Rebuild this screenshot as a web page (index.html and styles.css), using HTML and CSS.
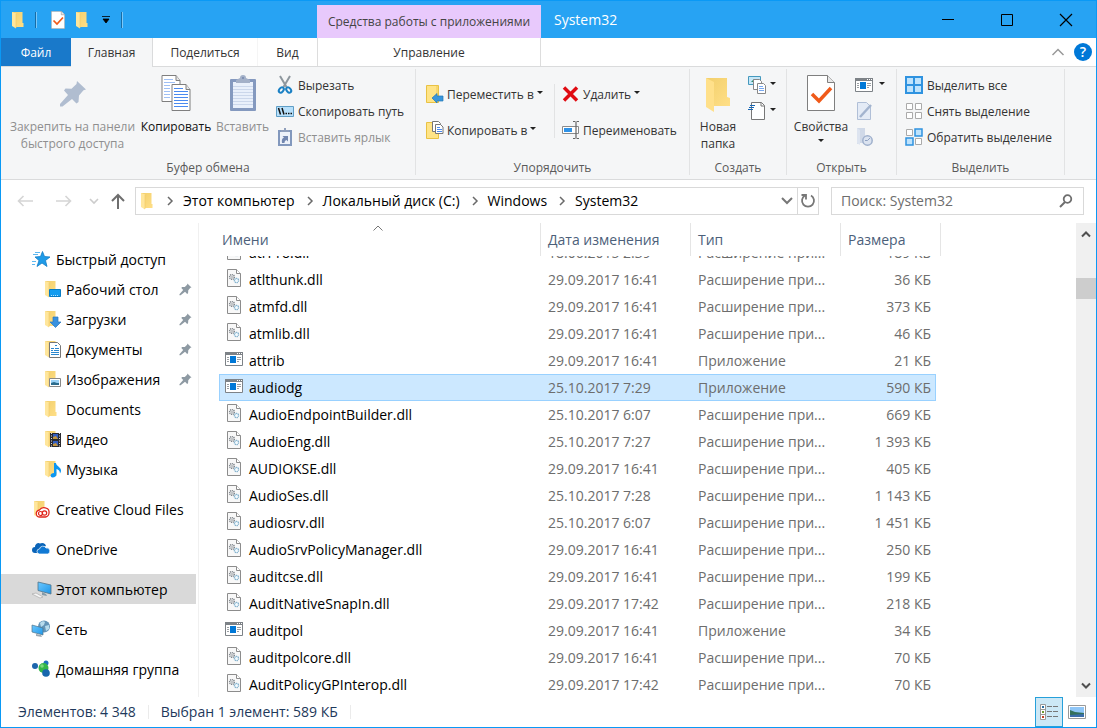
FILE: index.html
```html
<!DOCTYPE html>
<html lang="ru">
<head>
    <meta charset="UTF-8">
    <title>System32</title>
    <link rel="stylesheet" href="styles.css">
</head>
<body>
    <!-- Shared icons -->
    <svg class="sprite" aria-hidden="true">
        <defs>
            <linearGradient id="gold" x1="0" y1="0" x2="1" y2="1">
                <stop offset="0" stop-color="#f2cf6c"/><stop offset="1" stop-color="#ffdf87"/>
            </linearGradient>
            <linearGradient id="screen" x1="0" y1="0" x2="1" y2="1">
                <stop offset="0" stop-color="#6cc8ff"/><stop offset="1" stop-color="#1e96e8"/>
            </linearGradient>
        </defs>
        <symbol id="folder" viewBox="0 0 18 18">
            <path d="M1 1h10.500v11h1v4H3z" fill="url(#gold)"/>
            <path d="M1 1l4 1.500V17.500L1 15z" fill="#ffe69c"/>
            <path d="M5 3v14" stroke="#f0cb66" stroke-width=".6"/>
        </symbol>
        <symbol id="pin" viewBox="0 0 28 28">
            <path d="M18 1l9 8.500-2.500.8-4.500 5.200-.5 6.500-2 1.500-4.500-4.500L3.500 26.500H1V24l8-9-4-4.500 1.500-2 6 .2 5-4.700z"/>
        </symbol>
        <symbol id="dll" viewBox="0 0 18 18">
            <path d="M2.500 .5h9l4 4v13h-13z" fill="#f8f8f8" stroke="#8c8c8c"/>
            <path d="M11.500 .5v4h4" fill="#fff" stroke="#8c8c8c"/>
            <circle cx="7" cy="8" r="2.300" fill="none" stroke="#80868c" stroke-width="1.600" stroke-dasharray="1 .6"/>
            <circle cx="7" cy="8" r=".8" fill="#80868c"/>
            <circle cx="11.500" cy="11.500" r="2.100" fill="#f2f9fd" stroke="#7eaecb" stroke-width="1.300" stroke-dasharray="1.200 .5"/>
        </symbol>
        <symbol id="exe" viewBox="0 0 18 18">
            <path d="M.5 2.500h17v13H.5z" fill="#fff" stroke="#7d8287"/>
            <path d="M0 2h18v3H0z" fill="#7d8287"/>
            <path d="M12 3.500h1m1 0h1m1 0h1" stroke="#fff"/>
            <path d="M5 6h6v7H5z" fill="#0078d7"/>
            <path d="M2 7.500h2m-2 2h2m-2 2h2M12 7.500h4m-4 2h4m-4 2h2" stroke="#9a9fa3"/>
        </symbol>
        <symbol id="props" viewBox="0 0 28 36">
            <path d="M.5 .5h20l7 7v28H.5z" fill="#fff" stroke="#7f7f7f"/>
            <path d="M20.500 .5v7h7" fill="#e8e8e8" stroke="#7f7f7f"/>
            <path d="M5 19l7 7 12-13" fill="none" stroke="#f05a1a" stroke-width="3.500"/>
        </symbol>
        <symbol id="page" viewBox="0 0 19 27">
            <path d="M.5 .5h14l4 5v21H.5z" fill="#fff" stroke="#7f7f7f"/>
            <path d="M14.500 .5v5h4" fill="#e6e6e6" stroke="#7f7f7f"/>
        </symbol>
    </svg>

    <div class="window">
        <header class="titlebar">
            <div class="quick-access">
                <svg class="icon" viewBox="0 0 18 18"><use href="#folder"/></svg>
                <span class="divider"></span>
                <button class="quick" aria-label="Свойства"><svg class="icon" viewBox="0 0 28 36"><use href="#props"/></svg></button>
                <button class="quick" aria-label="Новая папка"><svg class="icon" viewBox="0 0 18 18"><use href="#folder"/></svg></button>
                <button class="quick customize" aria-label="Настройка"><svg width="8" height="8" viewBox="0 0 8 8"><path d="M0 .5h8M1 3h6L4 7z" stroke="#000" stroke-width=".8"/></svg></button>
                <span class="divider"></span>
            </div>
            <div class="context-title">Средства работы с приложениями</div>
            <h1 class="title">System32</h1>
            <div class="window-buttons">
                <button aria-label="Свернуть"><svg width="12" height="12"><path d="M0 5.500h12" stroke="#000"/></svg></button>
                <button aria-label="Развернуть"><svg width="12" height="12"><path d="M.5 .5h11v11H.5z" fill="none" stroke="#000"/></svg></button>
                <button aria-label="Закрыть"><svg width="12" height="12"><path d="M0 0l12 12M12 0L0 12" stroke="#000" stroke-width="1.200"/></svg></button>
            </div>
        </header>

        <nav class="tabs">
            <button class="tab file">Файл</button>
            <button class="tab home active">Главная</button>
            <button class="tab share">Поделиться</button>
            <button class="tab view">Вид</button>
            <button class="tab manage">Управление</button>
            <div class="tabs-right">
                <button class="collapse" aria-label="Свернуть ленту"><svg width="12" height="8"><path d="M.5 7L6 1.500 11.500 7" fill="none" stroke="#999" stroke-width="1.500"/></svg></button>
                <button class="help" aria-label="Справка">?</button>
            </div>
        </nav>

        <section class="ribbon">
            <div class="group clipboard">
                <div class="group-body">
                    <button class="big pin-button disabled">
                        <svg class="big-icon" viewBox="0 0 36 36"><use href="#pin" x="4" y="5" width="28" height="28" fill="#b0bdd0"/></svg>
                        <span>Закрепить на панели<br>быстрого доступа</span>
                    </button>
                    <button class="big copy-button strong">
                        <svg class="big-icon" viewBox="0 0 36 36">
                            <use href="#page" x="3" y="0" width="20" height="27"/>
                            <path d="M6 4.500h9m-9 3h11m-11 3h6m-6 3h6m-6 3h6m-6 3h6m-6 3h6" stroke="#9fc0f5"/>
                            <use href="#page" x="13" y="9" width="20" height="27"/>
                            <path d="M16 13.500h9m-9 3h14m-14 3h14m-14 3h14m-14 3h14m-14 3h14m-14 3h14" stroke="#4a8af0"/>
                        </svg>
                        <span>Копировать</span>
                    </button>
                    <button class="big paste-button disabled">
                        <svg class="big-icon" viewBox="0 0 36 36">
                            <rect x="5" y="4" width="26" height="32" rx="1" fill="#8499bf"/>
                            <path d="M8 7h20v26H8z" fill="#e9f0fb"/>
                            <path d="M8 11.500h20M8 14.500h20M8 17.500h20M8 20.500h20M8 23.500h20M8 26.500h20M8 29.500h20" stroke="#cbd7eb"/>
                            <path d="M11 8V5l4-2a3 3 0 0 1 6 0l4 2v3z" fill="#a3b0c8"/>
                            <circle cx="18" cy="3" r="1" fill="#7587ad"/>
                        </svg>
                        <span>Вставить</span>
                    </button>
                    <div class="stack">
                        <button class="small">
                            <svg class="icon" viewBox="0 0 18 18">
                                <path d="M4 0l6.500 11M14 0L7.500 11" stroke="#8e979e" stroke-width="2" fill="none"/>
                                <ellipse cx="5.300" cy="14" rx="2" ry="3" fill="none" stroke="#1a80c4" stroke-width="2" transform="rotate(40 5.300 14)"/>
                                <ellipse cx="12.700" cy="14" rx="2" ry="3" fill="none" stroke="#1a80c4" stroke-width="2" transform="rotate(-40 12.700 14)"/>
                            </svg>Вырезать
                        </button>
                        <button class="small">
                            <svg class="icon" viewBox="0 0 18 18">
                                <path d="M.5 4.500h17v10H.5z" fill="#b7e0fb" stroke="#5f9ec6"/>
                                <path d="M2.500 6l2 6.500M6 6l2 6.500M9.500 11.500h1.500m1 0h1.500m1 0H16" stroke="#111" stroke-width="1.500"/>
                            </svg>Скопировать путь
                        </button>
                        <button class="small disabled">
                            <svg class="icon" viewBox="0 0 18 18">
                                <path d="M3 3h12v14H3z" fill="#edf2fa" stroke="#8298bd" stroke-width="2"/>
                                <path d="M5 4V2h3V0h2v2h3v2z" fill="#8f9fbc"/>
                                <path d="M6 15c-.5-3 0-4.500 2-5.500L6.500 8H12v5.500l-1.500-1.500C9 12.500 8.500 13.500 8.500 15z" fill="#7287b0"/>
                            </svg>Вставить ярлык
                        </button>
                    </div>
                </div>
                <div class="group-name">Буфер обмена</div>
            </div>

            <div class="group organize">
                <div class="group-body">
                    <div class="stack wide transfer">
                        <button class="small">
                            <svg class="icon" viewBox="0 0 18 18">
                                <path d="M.5 .5h12v17H.5z" fill="#ffe487" stroke="#e9c244"/><path d="M11 1v13" stroke="#efcb57"/>
                                <path d="M6 13l5-4.500v2.500h6v5h-6v2z" fill="#3a96dc" stroke="#2478b5" stroke-width=".7"/>
                            </svg>Переместить в<i class="caret"></i>
                        </button>
                        <button class="small">
                            <svg class="icon" viewBox="0 0 18 18">
                                <path d="M.5 1.500h12v16H.5z" fill="#ffe487" stroke="#e9c244"/>
                                <path d="M6.500 .5h6l2 2v8h-8z" fill="#fff" stroke="#777"/>
                                <path d="M9.500 3.500h5l2.500 2.500v6.500H9.500z" fill="#fff" stroke="#777"/>
                                <path d="M11 6.500h3m-3 2h5m-5 2h5" stroke="#4a8af0"/>
                            </svg>Копировать в<i class="caret"></i>
                        </button>
                    </div>
                    <div class="stack wide edit">
                        <button class="small">
                            <svg class="icon" viewBox="0 0 18 18"><path d="M2 2.500l13 13M15 2.500l-13 13" stroke="#e00b12" stroke-width="3.500"/></svg>Удалить<i class="caret"></i>
                        </button>
                        <button class="small">
                            <svg class="icon" viewBox="0 0 18 18">
                                <path d="M.5 5.500h16v7H.5z" fill="#fff" stroke="#8b8b8b"/><path d="M2 7h8v4H2z" fill="#2f93e8"/>
                                <path d="M11 .5h2.500m1 0H17M11 17.500h2.500m1 0H17M14 1v16" stroke="#666" stroke-width="1.200"/>
                            </svg>Переименовать
                        </button>
                    </div>
                </div>
                <div class="group-name">Упорядочить</div>
            </div>

            <div class="group create">
                <div class="group-body">
                    <button class="big">
                        <svg class="big-icon" viewBox="0 0 36 36">
                            <path d="M6 3h21v19l3 1v8H14z" fill="url(#gold)"/><path d="M6 3l8 4v30l-8-5z" fill="#ffe08a"/>
                        </svg>
                        <span>Новая<br>папка</span>
                    </button>
                    <div class="stack">
                        <button class="small" aria-label="Создать элемент">
                            <svg class="icon" viewBox="0 0 18 18">
                                <path d="M.5 .5h12v8H.5z" fill="#c7e7f7" stroke="#4599be"/><path d="M3 6l3-3 3 3z" fill="#2b8c6b"/>
                                <path d="M5.500 3.500h6l2 2v8h-8z" fill="#fff" stroke="#888"/>
                                <path d="M9.500 7.500h6l2 2v8h-8z" fill="#fff" stroke="#888"/><path d="M11 10.500h4m-4 2h5m-5 2h5" stroke="#78a8f0"/>
                            </svg><i class="caret"></i>
                        </button>
                        <button class="small" aria-label="Простой доступ">
                            <svg class="icon" viewBox="0 0 18 18">
                                <path d="M3.500 .5h10l3 3v14h-13z" fill="#fff" stroke="#777"/><path d="M13 .5v3.500h3.500" fill="none" stroke="#777"/>
                                <path d="M2 3.500h5M1 5.500h5M0 7.500h5" stroke="#1767b5" stroke-width="1.200"/>
                            </svg><i class="caret"></i>
                        </button>
                    </div>
                </div>
                <div class="group-name">Создать</div>
            </div>

            <div class="group open">
                <div class="group-body">
                    <button class="big">
                        <svg class="big-icon" viewBox="0 0 36 36"><use href="#props" x="4" y="0" width="28" height="36"/></svg>
                        <span>Свойства</span>
                        <i class="caret"></i>
                    </button>
                    <div class="stack">
                        <button class="small" aria-label="Открыть"><svg class="icon" viewBox="0 0 18 18"><use href="#exe"/></svg><i class="caret"></i></button>
                        <button class="small" aria-label="Изменить">
                            <svg class="icon" viewBox="0 0 18 18"><path d="M2.500 .5h9l4 4v13h-13z" fill="#e4ebf6" stroke="#b0bfd7"/><path d="M5 15L16 3" stroke="#a3b4cf" stroke-width="2.500"/></svg>
                        </button>
                        <button class="small" aria-label="Журнал">
                            <svg class="icon" viewBox="0 0 18 18"><path d="M2 0h8v15H5l-3 1z" fill="#d0d9e8"/><path d="M2 0l3 2v15l-3-2z" fill="#dde4f0"/><circle cx="12.500" cy="12.500" r="4.700" fill="#dbe3f0" stroke="#9fb0cc" stroke-width="1.500"/><path d="M15 10l-2.500 2.500H10" stroke="#8fa2c2" fill="none"/></svg>
                        </button>
                    </div>
                </div>
                <div class="group-name">Открыть</div>
            </div>

            <div class="group select">
                <div class="group-body">
                    <div class="stack">
                        <button class="small">
                            <svg class="icon" viewBox="0 0 18 18"><path d="M1 1h16v16H1zM9 1v16M1 9h16" fill="#bfe3fc" stroke="#2f93e0" stroke-width="2"/></svg>Выделить все
                        </button>
                        <button class="small">
                            <svg class="icon" viewBox="0 0 18 18"><path d="M1.500 1.500h6v6h-6zM10.500 1.500h6v6h-6zM1.500 10.500h6v6h-6zM10.500 10.500h6v6h-6z" fill="#fff" stroke="#aaa"/></svg>Снять выделение
                        </button>
                        <button class="small">
                            <svg class="icon" viewBox="0 0 18 18"><path d="M1.500 1.500h6v6h-6zM10.500 10.500h6v6h-6z" fill="#fff" stroke="#aaa"/><path d="M10 1h7v7h-7zM1 10h7v7H1z" fill="#bfe3fc" stroke="#2f93e0" stroke-width="1.500"/></svg>Обратить выделение
                        </button>
                    </div>
                </div>
                <div class="group-name">Выделить</div>
            </div>
        </section>

        <div class="address-row">
            <div class="history">
                <button aria-label="Назад"><svg width="16" height="12"><path d="M16 6H1.500M6.500 1L1.500 6l5 5" fill="none" stroke="#d5d5d5" stroke-width="1.600"/></svg></button>
                <button aria-label="Вперед"><svg width="16" height="12"><path d="M0 6h14.500M9.500 1l5 5-5 5" fill="none" stroke="#d5d5d5" stroke-width="1.600"/></svg></button>
                <button class="recent" aria-label="Последние расположения"><svg width="8" height="6"><path d="M0 1l4 4 4-4" fill="none" stroke="#ccc" stroke-width="1.600"/></svg></button>
                <button class="up" aria-label="Вверх"><svg width="14" height="16"><path d="M7 16V2M1 8l6-6 6 6" fill="none" stroke="#6e6e6e" stroke-width="2"/></svg></button>
            </div>
            <div class="address">
                <svg class="icon" viewBox="0 0 18 18"><use href="#folder"/></svg>
                <svg class="arrow" width="6" height="8"><path d="M1 0l4 4-4 4"/></svg>
                <a href="#">Этот компьютер</a>
                <svg class="arrow" width="6" height="8"><path d="M1 0l4 4-4 4"/></svg>
                <a href="#">Локальный диск (C:)</a>
                <svg class="arrow" width="6" height="8"><path d="M1 0l4 4-4 4"/></svg>
                <a href="#">Windows</a>
                <svg class="arrow" width="6" height="8"><path d="M1 0l4 4-4 4"/></svg>
                <a href="#">System32</a>
                <button class="drop" aria-label="Предыдущие расположения"><svg width="12" height="8"><path d="M1 1l5 5 5-5" fill="none" stroke="#777" stroke-width="2"/></svg></button>
                <button class="refresh" aria-label="Обновить"><svg width="16" height="16"><path d="M11 2.500a6 6 0 1 1-6 0M1.500 2H6v4.500" fill="none" stroke="#777" stroke-width="1.800"/></svg></button>
            </div>
            <div class="search">
                <input type="text" placeholder="Поиск: System32" aria-label="Поиск">
                <svg width="14" height="14"><circle cx="8.500" cy="5" r="3.800" fill="none" stroke="#6e6e6e" stroke-width="1.800"/><path d="M6 8L1 13" stroke="#6e6e6e" stroke-width="2"/></svg>
            </div>
        </div>

        <main class="main">
            <nav class="sidebar">
                <a href="#"><svg class="icon" viewBox="0 0 18 18"><path d="M10.500 1.500l2 5 5.500.5-4.500 3.500 1.500 6-5-3.500-5 3.500 2-6L3 7l5.500-.5z" fill="#1f9be8" stroke="#147cc4" stroke-width=".8"/><path d="M3 2.500h5M1 4.500h5M0 11.500h4M0 14.500h3" stroke="#5cb7f0"/></svg>Быстрый доступ</a>
                <a href="#" class="sub"><svg class="icon" viewBox="0 0 18 18"><use href="#folder"/><path d="M5.500 9.500h11v7h-11z" fill="#149df0" stroke="#087cc4"/><path d="M7 15.500h8" stroke="#b9e3ff" stroke-dasharray="1"/></svg>Рабочий стол<svg class="pinned" viewBox="0 0 28 28"><use href="#pin"/></svg></a>
                <a href="#" class="sub"><svg class="icon" viewBox="0 0 18 18"><use href="#folder"/><path d="M9 7h5v5h3l-5.500 5.500L6 12h3z" fill="#3991df" stroke="#2777bd" stroke-width=".7"/></svg>Загрузки<svg class="pinned" viewBox="0 0 28 28"><use href="#pin"/></svg></a>
                <a href="#" class="sub"><svg class="icon" viewBox="0 0 18 18"><use href="#folder"/><path d="M5.500 2.500h8l3 3v12h-11z" fill="#fff" stroke="#777"/><path d="M11 5.500h2M7 8.500h3m1 0h4m-8 2h2m1 0h5m-8 2h8m-8 2h8" stroke="#2b88cf"/></svg>Документы<svg class="pinned" viewBox="0 0 28 28"><use href="#pin"/></svg></a>
                <a href="#" class="sub"><svg class="icon" viewBox="0 0 18 18"><use href="#folder"/><path d="M5.500 8.500h11v8h-11z" fill="#fff" stroke="#888"/><path d="M7 10h8v5H7z" fill="#9bd2f6"/><path d="M7 13l3-1 3 1 2 0v2H7z" fill="#2c6c8d"/></svg>Изображения<svg class="pinned" viewBox="0 0 28 28"><use href="#pin"/></svg></a>
                <a href="#" class="sub"><svg class="icon" viewBox="0 0 18 18"><use href="#folder"/></svg>Documents</a>
                <a href="#" class="sub"><svg class="icon" viewBox="0 0 18 18"><use href="#folder"/><path d="M6 3h11v14H6z" fill="#2a2a30"/><path d="M7.500 3v14M15.500 3v14" stroke="#ddd" stroke-dasharray="1 1.500"/><path d="M9 4h5v5H9zM9 11h5v5H9z" fill="#345fc0"/><path d="M9 7l3-1 2 3H9zM9 14l3-1 2 3H9z" fill="#c5963e"/></svg>Видео</a>
                <a href="#" class="sub"><svg class="icon" viewBox="0 0 18 18"><use href="#folder"/><path d="M10 3h2c0 3 5 4 5 7.500 0 1.500-.5 2-1 3 0-3-2-4-3.500-4.500V14c0 2-1.500 3.500-4 3.500S5.500 13 10 13z" fill="#0c97f2"/></svg>Музыка</a>
                <a href="#" class="root"><svg class="icon" viewBox="0 0 18 18"><use href="#folder" x="1"/><path d="M8 17a3.500 3.500 0 0 1-.5-7A5 4 0 0 1 17 12a4 4.500 0 0 1-3.500 5z" fill="#fff" stroke="#e0251b" stroke-width="1.300"/><circle cx="8.500" cy="13.500" r="2" fill="none" stroke="#e0251b" stroke-width="1.200"/><circle cx="12.500" cy="13" r="2.200" fill="none" stroke="#e0251b" stroke-width="1.200"/></svg>Creative Cloud Files</a>
                <a href="#" class="root"><svg class="icon" viewBox="0 0 18 18"><path d="M3 13a3 3 0 0 1 0-6 3.500 3.500 0 0 1 5-3.500A4 4 0 0 1 14 6L9 8l-3 5z" fill="#0a64b8"/><path d="M7.500 14a2.500 2.500 0 0 1 0-5 3.500 3.500 0 0 1 6.500-1 3 3 0 0 1 1.500 6z" fill="#1079d4" stroke="#fff" stroke-width=".7"/></svg>OneDrive</a>
                <a href="#" class="root current"><svg class="icon" viewBox="0 0 18 18"><path d="M6 2l13 3v9L6 10.500z" fill="url(#screen)" stroke="#527489" stroke-width=".8"/><path d="M10 12l4 2 1 2-5-1z" fill="#849ba9"/><path d="M0 14l4-1 7 4-3 1z" fill="#f5f5f5" stroke="#a2a2a2" stroke-width=".6"/></svg>Этот компьютер</a>
                <a href="#" class="root"><svg class="icon" viewBox="0 0 18 18"><circle cx="12" cy="6.500" r="6" fill="#6394b8"/><path d="M8 3c2-2 4-2 5-1l-1 3-3 2zM13 6l4-1 0 4-3 2z" fill="#b7dbed"/><path d="M0 5l11 3v7L0 12z" fill="url(#screen)" stroke="#527489" stroke-width=".7"/><path d="M4 14l5 1 1 2-6-1z" fill="#9ba8b1"/></svg>Сеть</a>
                <a href="#" class="root"><svg class="icon" viewBox="0 0 18 18"><circle cx="3" cy="6" r="3" fill="#1d65ad"/><circle cx="14" cy="3" r="2.500" fill="#1c70bd"/><circle cx="11.500" cy="8" r="5" fill="#35b64a"/><circle cx="14" cy="13" r="3.800" fill="#1766ad"/><circle cx="10" cy="6" r="1.800" fill="#7ddb7c"/></svg>Домашняя группа</a>
            </nav>

            <div class="files">
                <table>
                    <thead>
                        <tr>
                            <th>Имени<svg class="sort" width="10" height="6"><path d="M.5 5.500L5 1l4.500 4.500" fill="none" stroke="#777"/></svg></th>
                            <th>Дата изменения</th>
                            <th>Тип</th>
                            <th>Размера</th>
                        </tr>
                    </thead>
                    <tbody id="file-rows"></tbody>
                </table>
            </div>

            <div class="scrollbar">
                <button aria-label="Прокрутить вверх"><svg width="10" height="8"><path d="M1 6.500l4-4 4 4" fill="none" stroke="#505050" stroke-width="2"/></svg></button>
                <div class="thumb"></div>
                <button class="down" aria-label="Прокрутить вниз"><svg width="10" height="8"><path d="M1 1.500l4 4 4-4" fill="none" stroke="#505050" stroke-width="2"/></svg></button>
            </div>
        </main>

        <footer class="statusbar">
            <span>Элементов: 4 348</span>
            <span>Выбран 1 элемент: 589 КБ</span>
            <div class="views">
                <button class="active" aria-label="Таблица"><svg width="18" height="18"><path d="M.500 1.500h5v15h-5zM.5 6.500h5M.5 11.500h5" fill="#fff" stroke="#999"/><path d="M2 4h2" stroke="#286ea0" stroke-width="2"/><path d="M2 9h2" stroke="#6f9b2f" stroke-width="2"/><path d="M2 14h2" stroke="#c44024" stroke-width="2"/><path d="M7 3.500h5m1 0h5M7 8.500h5m1 0h5M7 13.500h5m1 0h5" stroke="#777"/></svg></button>
                <button aria-label="Крупные значки"><svg width="18" height="14"><path d="M.5 .5h17v13H.5z" fill="#fff" stroke="#999"/><path d="M2 2h14v10H2z" fill="#8fc6f7"/><path d="M2 5l5 2 9 1v2H2z" fill="#34705c"/><path d="M2 10l14-1v3H2z" fill="#3b6daa"/></svg></button>
            </div>
        </footer>
    </div>
    <script src="script.js"></script>
</body>
</html>
```

FILE: styles.css
```css
* {
    box-sizing: border-box;
}
body {
    margin: 0;
    font-family: "Open Sans", "Noto Sans", sans-serif;
    font-size: 14px;
    color: #000;
}
button {
    margin: 0;
    padding: 0;
    border: none;
    background: none;
    font: inherit;
    color: inherit;
}
a {
    color: inherit;
    text-decoration: none;
}
svg {
    flex: none;
    overflow: visible;
}
.sprite {
    position: absolute;
    width: 0;
    height: 0;
}
.icon {
    width: 18px;
    height: 18px;
}
.window {
    display: flex;
    flex-direction: column;
    height: 100vh;
    border: 1px solid #0a99f5;
    background: #fff;
    overflow: hidden;
}

/* Title bar */
.titlebar {
    display: flex;
    flex: none;
    height: 37px;
    background: #27a3f3;
}
.quick-access {
    display: flex;
    align-items: center;
    width: 316px;
    padding-left: 10px;
}
.quick-access .divider {
    width: 2px;
    height: 16px;
    margin: 0 8px 0 6px;
    border-left: 1px solid #176ca5;
    border-right: 1px solid #7cc8f8;
}
.quick {
    display: flex;
    justify-content: center;
    width: 26px;
}
.quick.customize {
    width: 18px;
}
.context-title {
    width: 224px;
    margin-top: 4px;
    background: #e8c9fc;
    color: #444;
    font-size: 12px;
    line-height: 34px;
    text-align: center;
    white-space: nowrap;
}
.title {
    flex: 1;
    margin: 0;
    padding-left: 13px;
    color: #fff;
    font-size: 14px;
    font-weight: 400;
    line-height: 37px;
}
.window-buttons {
    display: flex;
    padding-right: 1px;
}
.window-buttons button {
    display: flex;
    align-items: center;
    justify-content: center;
    width: 59px;
}

/* Tabs */
.tabs {
    display: flex;
    flex: none;
    height: 29px;
    border-bottom: 1px solid #dadbdc;
    font-size: 12px;
    color: #333;
}
.tab {
    height: 28px;
}
.tab.file {
    width: 70px;
    background: #1979ca;
    color: #fff;
}
.tab.home {
    width: 82px;
}
.tab.active {
    height: 29px;
    padding-bottom: 1px;
    background: #f5f6f7;
    border-right: 1px solid #dadbdc;
}
.tab.share {
    width: 105px;
    border-right: 1px solid #f5f5f5;
}
.tab.view {
    width: 59px;
}
.tab.manage {
    width: 224px;
    border-left: 1px solid #ddd;
    border-right: 1px solid #ddd;
}
.tabs-right {
    display: flex;
    align-items: center;
    gap: 10px;
    margin-left: auto;
    padding-right: 4px;
}
.collapse {
    display: flex;
}
.help {
    width: 18px;
    height: 18px;
    border-radius: 50%;
    background: #0078d7;
    color: #fff;
    font-size: 14px;
    font-weight: 600;
    line-height: 18px;
}

/* Ribbon */
.ribbon {
    display: flex;
    flex: none;
    height: 113px;
    padding: 2px 0 4px;
    background: #f5f6f7;
    border-bottom: 1px solid #dadbdc;
    color: #333;
    font-size: 12px;
    white-space: nowrap;
}
.group {
    display: flex;
    flex-direction: column;
    flex: none;
    border-right: 1px solid #e2e3e4;
}
.group.clipboard {
    width: 415px;
}
.group.organize {
    width: 274px;
}
.group.create {
    width: 97px;
}
.group.open {
    width: 110px;
}
.group.select {
    width: 168px;
}
.group-body {
    display: flex;
    flex: 1;
    padding: 3px 8px 0;
}
.group-name {
    color: #5a5a5a;
    line-height: 14px;
    text-align: center;
}
.big {
    display: flex;
    flex-direction: column;
    align-items: center;
    padding-top: 3px;
    line-height: 17px;
}
.big-icon {
    width: 36px;
    height: 36px;
    margin-bottom: 7px;
}
.strong {
    color: #111;
}
.disabled {
    color: #8f8f8f;
}
.pin-button {
    width: 127px;
}
.copy-button {
    width: 80px;
}
.paste-button {
    width: 53px;
}
.stack {
    display: flex;
    flex-direction: column;
    margin-left: 6px;
}
.small {
    display: flex;
    align-items: center;
    gap: 4px;
    height: 26px;
}
.stack.wide {
    gap: 10px;
    margin: 0;
    padding-top: 9px;
}
.wide .small {
    gap: 3px;
}
.organize .group-body {
    padding-left: 10px;
}
.transfer {
    width: 128px;
}
.edit {
    padding-left: 8px;
    background: linear-gradient(#e2e3e4, #e2e3e4) 0 12px / 1px 54px no-repeat;
}
.caret {
    margin: 0 0 3px 4px;
    border: 3px solid transparent;
    border-top-color: #222;
    border-bottom: none;
}
.big .caret {
    margin: 4px 0 0;
}
.clipboard .stack {
    margin-left: 7px;
}
.create .big {
    width: 40px;
}
.create .stack {
    margin-left: 10px;
}
.stack .icon + .caret {
    margin-left: 0;
}
.open .group-body {
    padding-left: 6px;
}
.open .big {
    width: 56px;
}
.open .stack .caret {
    margin-left: 2px;
}
.select .stack {
    margin-left: 0;
}

/* Address row */
.address-row {
    display: flex;
    align-items: center;
    flex: none;
    height: 43px;
    padding: 0 12px 2px 16px;
}
.history {
    display: flex;
    align-items: center;
    width: 118px;
}
.history button {
    display: flex;
    margin-right: 23px;
}
.history .recent,
.history .up {
    margin-left: -5px;
}
.history .recent {
    margin-right: 18px;
}
.history .up {
    margin-right: 0;
}
.address {
    display: flex;
    align-items: center;
    flex: 1;
    height: 28px;
    padding-left: 4px;
    border: 1px solid #d9d9d9;
    white-space: nowrap;
}
.address .icon {
    margin-right: -3px;
}
.arrow {
    margin: 0 10px 0 12px;
    fill: none;
    stroke: #6a6a6a;
    stroke-width: 1.5;
}
.address .drop {
    margin-left: auto;
    width: 20px;
    display: flex;
    justify-content: center;
}
.address .refresh {
    display: flex;
    align-items: center;
    justify-content: center;
    width: 21px;
    height: 26px;
    border-left: 1px solid #d9d9d9;
}
.search {
    display: flex;
    align-items: center;
    width: 253px;
    height: 28px;
    margin-left: 12px;
    padding: 0 10px 0 9px;
    border: 1px solid #d9d9d9;
}
.search input {
    flex: 1;
    min-width: 0;
    padding: 0;
    border: none;
    outline: none;
    font: inherit;
}
.search input::placeholder {
    color: #6d6d6d;
}

/* Navigation pane */
.main {
    display: flex;
    flex: 1;
    min-height: 0;
}
.sidebar {
    display: flex;
    flex-direction: column;
    flex: none;
    width: 198px;
    padding: 21px 2px 0 0;
    border-right: 1px solid #f0f0f0;
    white-space: nowrap;
}
.sidebar a {
    display: flex;
    align-items: center;
    gap: 6px;
    flex: none;
    height: 30px;
    padding-left: 31px;
}
.sidebar .sub {
    gap: 4px;
    padding-left: 43px;
}
.sidebar .root {
    margin-top: 10px;
}
.sidebar .current {
    background: #d9d9d9;
}
.pinned {
    width: 13px;
    height: 13px;
    margin: 0 4px 0 auto;
    fill: #8e9aa3;
}

/* File list */
.files {
    flex: 1;
    min-width: 0;
    padding-left: 20px;
    overflow: hidden;
}
table {
    display: flex;
    flex-direction: column;
    height: 100%;
}
thead {
    display: block;
    flex: none;
}
tbody {
    display: block;
    flex: 1;
    min-height: 0;
    overflow: hidden;
}
tr {
    display: grid;
    grid-template-columns: 322px 150px 150px 95px;
    width: 717px;
}
thead tr {
    grid-template-columns: 322px 150px 150px 100px;
    width: 722px;
}
th {
    position: relative;
    padding: 0 0 0 7px;
    border-right: 1px solid #e5e5e5;
    color: #4c607a;
    font-weight: 400;
    line-height: 33px;
    text-align: left;
}
th:first-child {
    padding-left: 3px;
}
.sort {
    position: absolute;
    top: 2px;
    left: 154px;
}
td {
    height: 27px;
    padding: 0 5px 0 7px;
    color: #6d6d6d;
    line-height: 27px;
    white-space: nowrap;
}
td.name {
    display: flex;
    align-items: center;
    gap: 6px;
    padding-left: 6px;
    color: #000;
}
td.name .icon {
    margin-bottom: 3px;
}
td.size {
    text-align: right;
}
.selected {
    background: #cce8ff;
    box-shadow: inset 0 0 0 1px #99d1ff;
}
.scrollbar {
    display: flex;
    flex-direction: column;
    flex: none;
    width: 20px;
    background: #f0f0f0;
}
.scrollbar button {
    display: flex;
    align-items: center;
    justify-content: center;
    height: 22px;
}
.thumb {
    height: 21px;
    margin-top: 33px;
    background: #cdcdcd;
}
.scrollbar .down {
    margin-top: auto;
}

/* Status bar */
.statusbar {
    display: flex;
    align-items: center;
    flex: none;
    height: 30px;
    padding-left: 5px;
    color: #1e395b;
}
.statusbar span {
    padding: 0 12px;
    border-right: 1px solid #ebebeb;
    line-height: 14px;
}
.views {
    display: flex;
    margin-left: auto;
    padding-right: 5px;
}
.views button {
    display: flex;
    align-items: center;
    justify-content: center;
    width: 28px;
    height: 30px;
}
.views .active {
    background: #cce8f6;
    border: 1px solid #26a0da;
}
```

FILE: script.js
```js
const files = [
    ['atrPro.dll', '18.06.2015 2:39', 'dll', '189'],
    ['atlthunk.dll', '29.09.2017 16:41', 'dll', '36'],
    ['atmfd.dll', '29.09.2017 16:41', 'dll', '373'],
    ['atmlib.dll', '29.09.2017 16:41', 'dll', '46'],
    ['attrib', '29.09.2017 16:41', 'exe', '21'],
    ['audiodg', '25.10.2017 7:29', 'exe', '590'],
    ['AudioEndpointBuilder.dll', '25.10.2017 6:07', 'dll', '669'],
    ['AudioEng.dll', '25.10.2017 7:27', 'dll', '1 393'],
    ['AUDIOKSE.dll', '29.09.2017 16:41', 'dll', '405'],
    ['AudioSes.dll', '25.10.2017 7:28', 'dll', '1 143'],
    ['audiosrv.dll', '25.10.2017 6:07', 'dll', '1 451'],
    ['AudioSrvPolicyManager.dll', '29.09.2017 16:41', 'dll', '250'],
    ['auditcse.dll', '29.09.2017 16:41', 'dll', '199'],
    ['AuditNativeSnapIn.dll', '29.09.2017 17:42', 'dll', '218'],
    ['auditpol', '29.09.2017 16:41', 'exe', '34'],
    ['auditpolcore.dll', '29.09.2017 16:41', 'dll', '70'],
    ['AuditPolicyGPInterop.dll', '29.09.2017 17:42', 'dll', '70']
];

// Only the two kinds of file found in this folder
const types = {
    dll: 'Расширение при...',
    exe: 'Приложение'
};

const tbody = document.getElementById('file-rows');

files.forEach(([name, date, kind, size]) => {
    const row = document.createElement('tr');
    if (name === 'audiodg') {
        row.className = 'selected';
    }
    row.innerHTML = `
        <td class="name"><svg class="icon" viewBox="0 0 18 18"><use href="#${kind}"/></svg>${name}</td>
        <td>${date}</td>
        <td>${types[kind]}</td>
        <td class="size">${size} КБ</td>`;
    tbody.appendChild(row);
});

// Start part way into the first row
tbody.scrollTop = 17;
```
